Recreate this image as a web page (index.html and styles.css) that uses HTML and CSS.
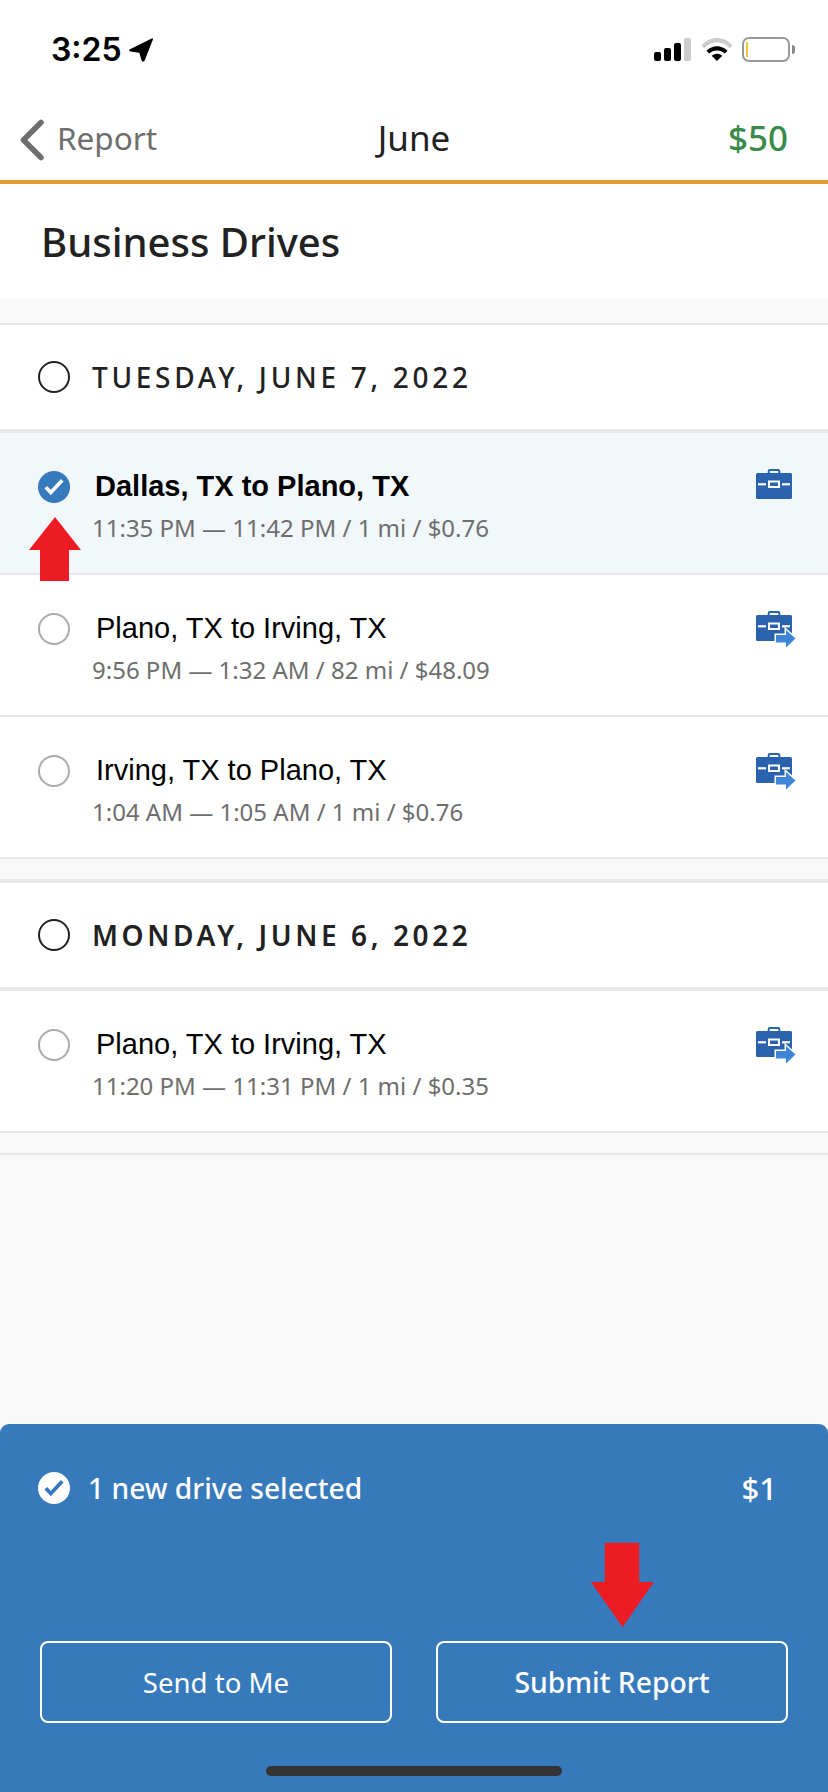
FILE: index.html
```html
<!DOCTYPE html>
<html lang="en">
<head>
<meta charset="utf-8">
<title>Business Drives</title>
<link rel="stylesheet" href="styles.css">
</head>
<body>
<svg class="defs" width="0" height="0" aria-hidden="true">
  <symbol id="case" viewBox="0 0 40 32">
    <path d="M12.700 5V2.200a1.200 1.200 0 0 1 1.200-1.200h8.200a1.200 1.200 0 0 1 1.200 1.200V5" fill="none" stroke="#2a62ad" stroke-width="2"/>
    <rect x="0" y="4" width="36" height="26" rx="1.500" fill="#2a62ad"/>
    <rect x="2" y="14.200" width="8" height="2.200" fill="#fff"/>
    <rect x="26" y="14.200" width="8" height="2.200" fill="#fff"/>
    <rect x="13" y="12.500" width="10" height="5.500" fill="none" stroke="#fff" stroke-width="2"/>
  </symbol>
  <symbol id="check" viewBox="0 0 32 32">
    <path d="M9 17.500l3.800 4 10.200-11" fill="none" stroke="currentColor" stroke-width="3.600" stroke-linecap="square"/>
  </symbol>
</svg>

<div class="screen">
  <div class="status">
    <div class="clock">
      <span class="time">3:25</span>
      <svg class="loc" viewBox="0 0 24 24"><path d="M22.700.4c.8-.4 1.500.2 1.200 1L15.700 22.600c-.6 1.500-2.600 1.500-3.100 0L10.300 14.700 1.500 13.600C0 13.400-.3 11.800 1 11.200z" fill="#000"/></svg>
    </div>
    <div class="sys">
      <svg class="signal" viewBox="0 0 37 23">
        <rect x="0" y="14" width="7" height="9" rx="2" fill="#000"/>
        <rect x="10" y="10" width="7" height="13" rx="2" fill="#000"/>
        <rect x="20" y="5" width="7" height="18" rx="2" fill="#000"/>
        <rect x="30" y="0" width="7" height="23" rx="2" fill="#ccc"/>
      </svg>
      <svg class="wifi" viewBox="0 0 32 24">
        <path d="M.5 8.300C9.500-1.500 22.500-1.500 31.500 8.300l-2.700 3C21.300 3.200 10.700 3.200 3.200 11.300z" fill="#ccc"/>
        <path d="M5.500 13.700c5.800-6 15.200-6 21 0l-2.700 2.900c-4.300-4.200-11.300-4.200-15.600 0z" fill="#000"/>
        <path d="M10.700 18.800c3-2.800 7.600-2.800 10.600 0L16 24z" fill="#000"/>
      </svg>
      <div class="battery"><span class="level"></span></div>
    </div>
  </div>

  <header class="nav">
    <div class="back">
      <svg class="chev" viewBox="0 0 26 42"><path d="M22 3.500 4.500 21 22 38.500" fill="none" stroke="#6e6e6e" stroke-width="5.500" stroke-linecap="round" stroke-linejoin="round"/></svg>
      <span>Report</span>
    </div>
    <div class="month">June</div>
    <div class="total">$50</div>
  </header>

  <div class="title-bar"><h1>Business Drives</h1></div>

  <main class="list">
    <section class="group">
      <div class="day">
        <span class="radio radio-day"></span>
        <h2>TUESDAY, JUNE 7, 2022</h2>
      </div>
      <div class="drive selected">
        <span class="radio radio-on"><svg><use href="#check"/></svg></span>
        <div class="info">
          <div class="route">Dallas, TX to Plano, TX</div>
          <div class="meta">11:35 PM — 11:42 PM / 1 mi / $0.76</div>
        </div>
        <svg class="case" viewBox="0 0 40 37"><use href="#case" width="40" height="32"/></svg>
      </div>
      <div class="drive">
        <span class="radio"></span>
        <div class="info">
          <div class="route">Plano, TX to Irving, TX</div>
          <div class="meta">9:56 PM — 1:32 AM / 82 mi / $48.09</div>
        </div>
        <svg class="case" viewBox="0 0 40 37"><use href="#case" width="40" height="32"/><path class="go" d="M20 24h10v-5l9.500 8.500-9.500 9v-5H20z"/></svg>
      </div>
      <div class="drive">
        <span class="radio"></span>
        <div class="info">
          <div class="route">Irving, TX to Plano, TX</div>
          <div class="meta">1:04 AM — 1:05 AM / 1 mi / $0.76</div>
        </div>
        <svg class="case" viewBox="0 0 40 37"><use href="#case" width="40" height="32"/><path class="go" d="M20 24h10v-5l9.500 8.500-9.500 9v-5H20z"/></svg>
      </div>
    </section>

    <section class="group">
      <div class="day day-next">
        <span class="radio radio-day"></span>
        <h2>MONDAY, JUNE 6, 2022</h2>
      </div>
      <div class="drive">
        <span class="radio"></span>
        <div class="info">
          <div class="route">Plano, TX to Irving, TX</div>
          <div class="meta">11:20 PM — 11:31 PM / 1 mi / $0.35</div>
        </div>
        <svg class="case" viewBox="0 0 40 37"><use href="#case" width="40" height="32"/><path class="go" d="M20 24h10v-5l9.500 8.500-9.500 9v-5H20z"/></svg>
      </div>
    </section>
    <div class="end-rule"></div>
  </main>

  <footer class="panel">
    <div class="summary">
      <span class="radio radio-white"><svg><use href="#check"/></svg></span>
      <span class="count">1 new drive selected</span>
      <span class="sum">$1</span>
    </div>
    <div class="actions">
      <button class="btn" type="button">Send to Me</button>
      <button class="btn btn-main" type="button">Submit Report</button>
    </div>
    <div class="home"></div>
  </footer>

  <svg class="arrow arrow-up" viewBox="0 0 52 64"><path d="M26 0 52 33H40v31H11V33H0z" fill="#ed1c24"/></svg>
  <svg class="arrow arrow-down" viewBox="0 0 64 86"><path d="M14 0h35v40h15L32 86 0 40h14z" fill="#ed1c24"/></svg>
</div>
</body>
</html>
```
FILE: styles.css
```css
* { box-sizing: border-box; }
html, body { margin: 0; padding: 0; }
body { background: #fff; font-family: "Noto Sans", "Open Sans", sans-serif; color: #222; }
.defs { position: absolute; }
.screen { position: relative; width: 828px; height: 1792px; display: flex; flex-direction: column; overflow: hidden; background: #f8f8f8; }

.status { height: 100px; background: #fff; display: flex; justify-content: space-between; padding: 37px 38px 0 51px; }
.clock { display: flex; align-items: flex-start; gap: 7px; }
.time { font-family: Inter, "Liberation Sans", sans-serif; font-weight: 600; font-size: 32px; line-height: 26px; color: #000; }
.loc { width: 24px; height: 24px; margin-top: 1px; }
.sys { display: flex; align-items: flex-start; }
.signal { width: 37px; height: 23px; margin-top: 1px; }
.wifi { width: 32px; height: 24px; margin-left: 10px; }
.battery { position: relative; width: 48px; height: 25px; margin-left: 9px; border: 2px solid #999; border-radius: 7px; background: #fff; }
.battery::after { content: ""; position: absolute; left: 48px; top: 6px; width: 3px; height: 9px; border-radius: 0 3px 3px 0; background: #888; }
.level { position: absolute; left: 2px; top: 3px; width: 2px; height: 15px; background: #f5c52c; }

.nav { height: 84px; background: #fff; border-bottom: 4px solid #e59b35; display: flex; align-items: center; justify-content: space-between; padding: 0 40px 4px 19px; position: relative; }
.back { display: flex; align-items: center; gap: 12px; color: #6e6e6e; font-size: 31.500px; line-height: 40px; }
.chev { width: 26px; height: 42px; margin-top: 4px; }
.month { position: absolute; left: 0; right: 0; top: 16px; text-align: center; font-size: 35px; line-height: 44px; color: #222; }
.total { font-size: 35px; line-height: 44px; color: #3a8a4a; font-weight: 500; }

.title-bar { height: 115px; background: #fff; padding: 32px 0 0 41px; }
h1 { margin: 0; font-size: 40px; line-height: 52px; font-weight: 500; color: #222; }

.list { flex: 1; padding-top: 24px; }
.group { margin-bottom: 20px; }
.day { height: 110px; background: #fff; border-top: 2px solid #e8e8e8; border-bottom: 4px solid #e8e8e8; display: flex; align-items: center; padding: 0 0 0 38px; gap: 22px; }
.day-next { height: 112px; border-top-width: 4px; }
h2 { margin: 0; font-size: 28px; line-height: 36px; font-weight: 500; letter-spacing: 3.700px; color: #222; }
.day-next h2 { font-weight: 600; letter-spacing: 3.600px; }

.drive { height: 142px; background: #fff; border-bottom: 2px solid #e8e8e8; display: flex; align-items: flex-start; padding: 38px 0 0 38px; position: relative; }
.selected { background: #f2f7fa; }

.radio { display: block; width: 32px; height: 32px; border-radius: 50%; border: 2px solid #ababab; flex: none; }
.radio-day { border-color: #222; }
.radio-on { background: #357abd; border: 0; color: #fff; }
.radio-white { background: #fff; border: 0; color: #357abd; }
.radio svg { display: block; width: 32px; height: 32px; }

.info { margin-left: 26px; flex: 1; margin-top: -3px; }
.route { font-family: "Liberation Sans", Arial, sans-serif; font-size: 29px; line-height: 36px; color: #000; }
.selected .route { font-weight: 700; margin-left: -1px; }
.meta { font-size: 24px; line-height: 32px; margin: 8px 0 0 -4px; color: #6e6e6e; }
.case { width: 40px; height: 37px; position: absolute; left: 756px; top: 36px; }
.go { fill: #3f86d8; stroke: #fff; stroke-width: 3px; paint-order: stroke; }

.end-rule { height: 2px; background: #e8e8e8; }

.panel { height: 368px; flex: none; background: #367abb; border-radius: 9px 9px 0 0; color: #fff; padding: 48px 40px 0 38px; position: relative; }
.summary { display: flex; align-items: center; height: 32px; }
.count { margin-left: 18px; font-size: 28.200px; line-height: 36px; font-weight: 500; flex: 1; }
.sum { font-size: 31px; line-height: 36px; font-weight: 500; margin-right: 11px; }
.actions { display: flex; gap: 44px; margin: 137px 0 0 2px; }
.btn { flex: 1; height: 82px; background: transparent; border: 2px solid #fff; border-radius: 8px; color: #fff; font-family: inherit; font-size: 27.600px; padding: 0; }
.btn-main { font-size: 28.300px; font-weight: 500; }
.home { position: absolute; left: 266px; top: 342px; width: 296px; height: 10px; border-radius: 5px; background: #333; }

.arrow { position: absolute; }
.arrow-up { left: 29px; top: 517px; width: 52px; height: 64px; }
.arrow-down { left: 591px; top: 1542px; width: 63px; height: 86px; }
```
